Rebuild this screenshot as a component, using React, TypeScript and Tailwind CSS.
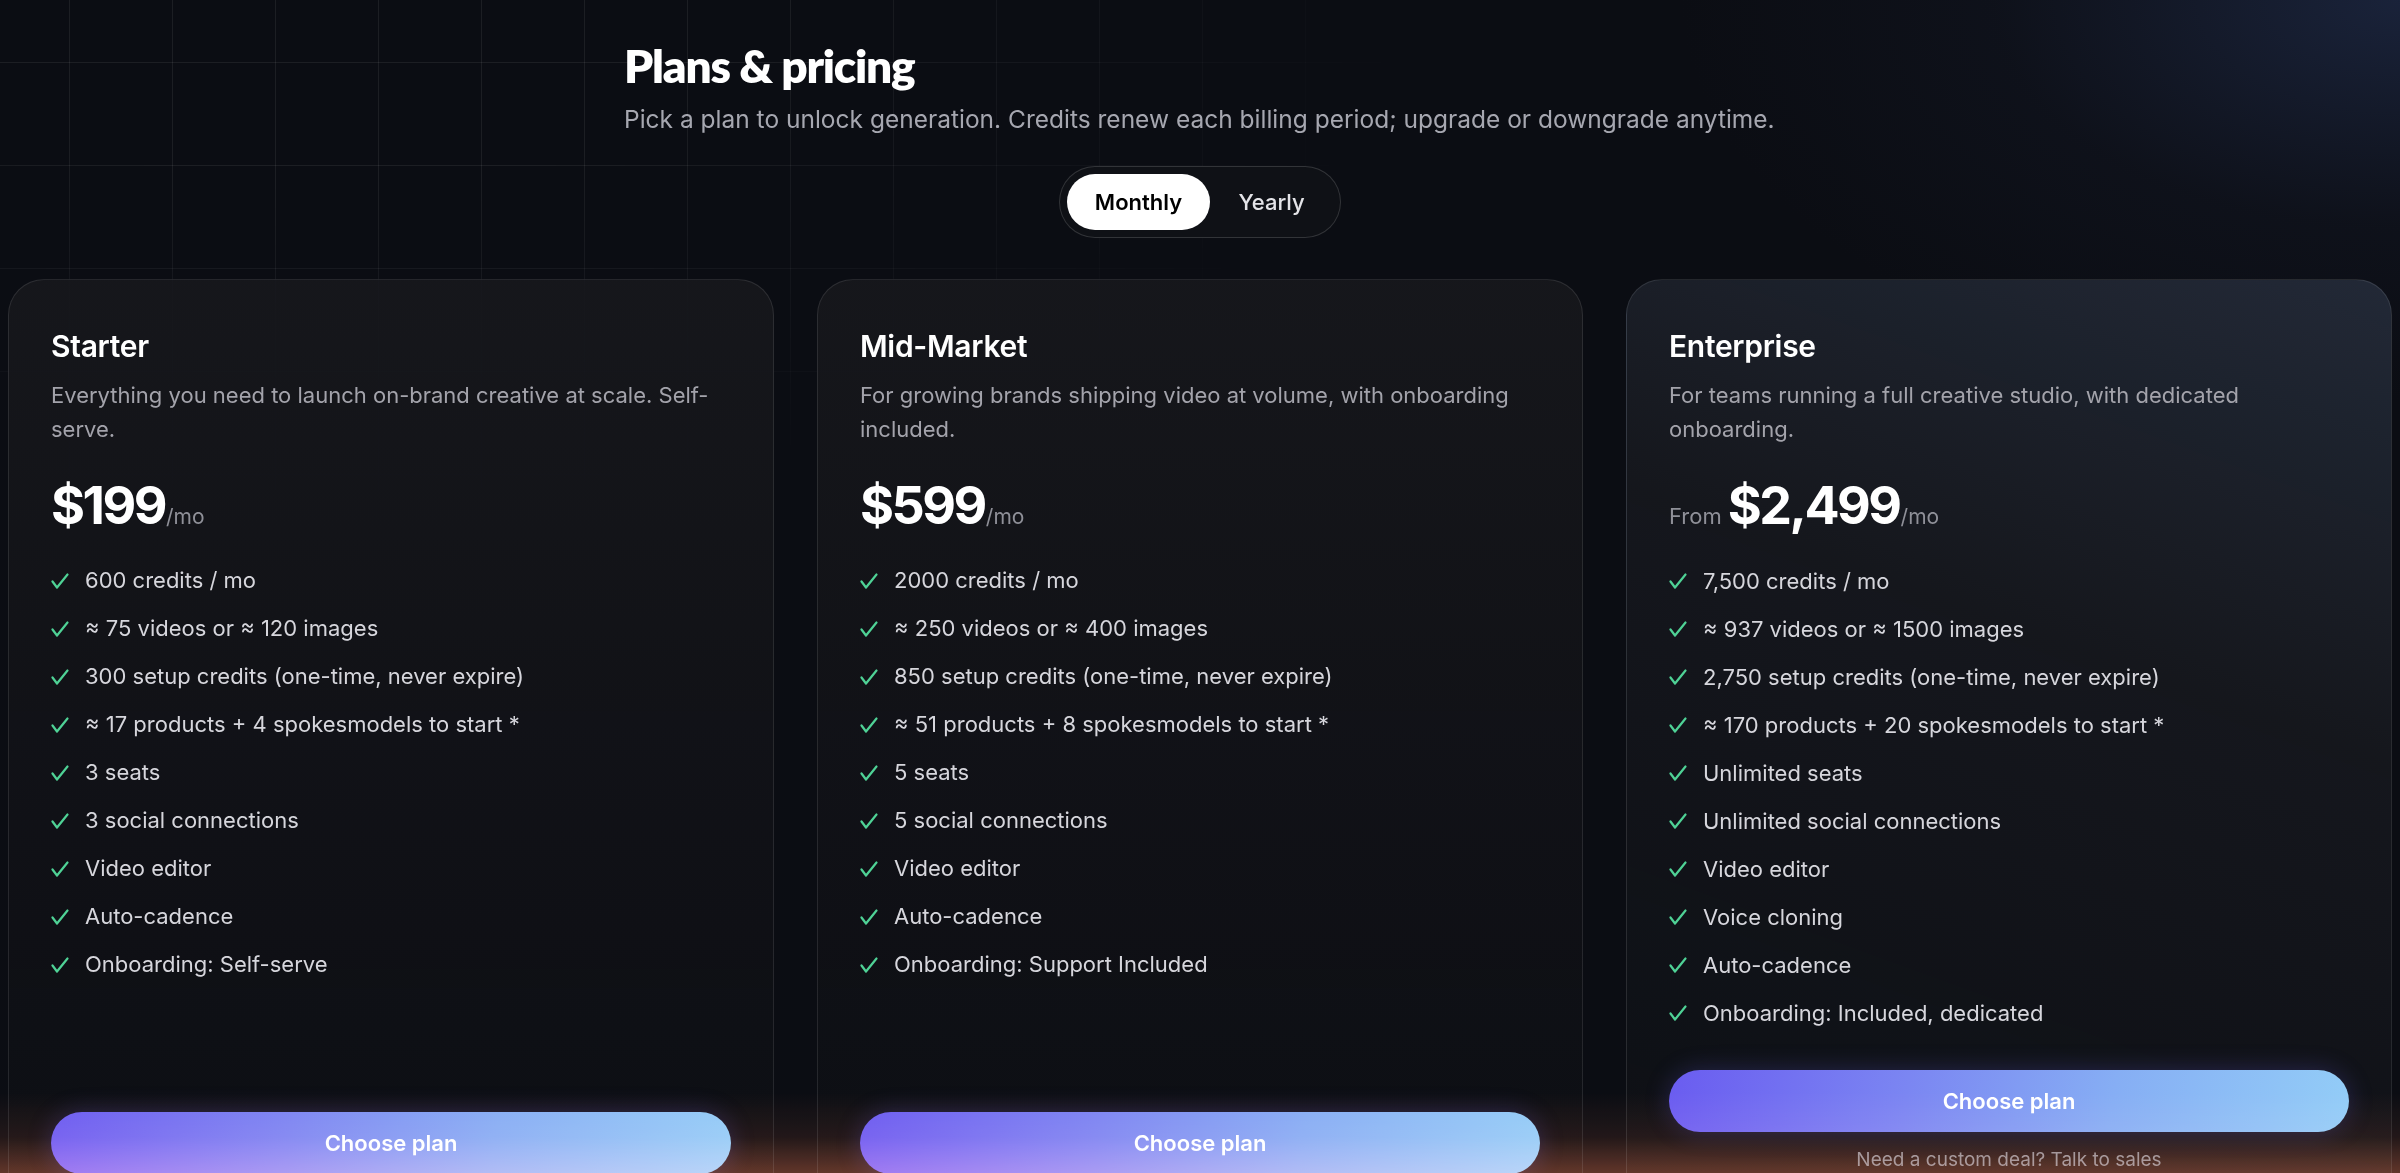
import React, { useState } from "react";

type Plan = {
  name: string;
  blurb: string;
  price: string;
  prefix?: string;
  features: string[];
  footnote?: string;
  tint?: boolean;
};

const plans: Plan[] = [
  {
    name: "Starter",
    blurb: "Everything you need to launch on-brand creative at scale. Self-serve.",
    price: "$199",
    features: [
      "600 credits / mo",
      "≈ 75 videos or ≈ 120 images",
      "300 setup credits (one-time, never expire)",
      "≈ 17 products + 4 spokesmodels to start *",
      "3 seats",
      "3 social connections",
      "Video editor",
      "Auto-cadence",
      "Onboarding: Self-serve",
    ],
  },
  {
    name: "Mid-Market",
    blurb: "For growing brands shipping video at volume, with onboarding included.",
    price: "$599",
    features: [
      "2000 credits / mo",
      "≈ 250 videos or ≈ 400 images",
      "850 setup credits (one-time, never expire)",
      "≈ 51 products + 8 spokesmodels to start *",
      "5 seats",
      "5 social connections",
      "Video editor",
      "Auto-cadence",
      "Onboarding: Support Included",
    ],
  },
  {
    name: "Enterprise",
    blurb: "For teams running a full creative studio, with dedicated onboarding.",
    price: "$2,499",
    prefix: "From",
    features: [
      "7,500 credits / mo",
      "≈ 937 videos or ≈ 1500 images",
      "2,750 setup credits (one-time, never expire)",
      "≈ 170 products + 20 spokesmodels to start *",
      "Unlimited seats",
      "Unlimited social connections",
      "Video editor",
      "Voice cloning",
      "Auto-cadence",
      "Onboarding: Included, dedicated",
    ],
    footnote: "Need a custom deal? Talk to sales",
    tint: true,
  },
];

function Check() {
  return (
    <svg
      aria-hidden="true"
      viewBox="0 0 18 16"
      className="h-[16px] w-[18px]"
      fill="none"
      stroke="currentColor"
      strokeWidth="2.2"
      strokeLinecap="round"
      strokeLinejoin="round"
    >
      <path d="M1.5 8.5 L6 14.5 L16.5 1.5" />
    </svg>
  );
}

function PlanCard({ plan }: { plan: Plan }) {
  return (
    <div
      className={`relative flex flex-col rounded-[36px] border border-white/10 px-[42px] pt-[46px] pb-[42px] ${
        plan.tint
          ? "bg-[linear-gradient(200deg,rgba(36,43,58,0.92)_0%,rgba(22,24,30,0.9)_40%,rgba(14,16,21,0.8)_100%)]"
          : "bg-[linear-gradient(180deg,rgba(23,24,29,0.9)_0%,rgba(18,19,24,0.9)_45%,rgba(14,15,20,0.8)_100%)]"
      }`}
    >
      <h2 className="text-[30px] font-semibold leading-[40px] tracking-[-0.3px] text-white">
        {plan.name}
      </h2>
      <p className="mt-3 text-[22px] leading-[34px] text-[#a3a3ab]">{plan.blurb}</p>

      <div className="mt-[34px] flex items-baseline">
        {plan.prefix && (
          <span className="mr-[6px] text-[22px] text-[#8f9098]">{plan.prefix}</span>
        )}
        <span className="text-[52px] font-bold leading-none tracking-[-2.5px] text-white">
          {plan.price}
        </span>
        <span className="ml-[1px] text-[21px] text-[#8f9098]">/mo</span>
      </div>

      <ul className="mt-[24px] flex-1">
        {plan.features.map((f) => (
          <li key={f} className="flex h-12 items-center text-[22px] text-[#d6d6dc]">
            <span className="flex w-[34px] shrink-0 text-[#4fd296]">
              <Check />
            </span>
            <span>{f}</span>
          </li>
        ))}
      </ul>

      <button
        type="button"
        className="mt-[33px] h-[62px] w-full rounded-full bg-[linear-gradient(100deg,#6a5cf0_0%,#7b86f2_35%,#86aef4_65%,#93cdf7_100%)] text-[22px] font-semibold text-white shadow-[0_0_24px_rgba(110,100,240,0.25)]"
      >
        Choose plan
      </button>
      {plan.footnote && (
        <p className="mt-[14px] text-center text-[19px] leading-[28px] text-[#8c8c95]">
          {plan.footnote}
        </p>
      )}
    </div>
  );
}

export default function App() {
  const [billing, setBilling] = useState<"monthly" | "yearly">("monthly");

  return (
    <div
      className="relative min-h-screen overflow-hidden bg-[#0b0d13] pb-10 text-white"
      style={{ fontFamily: "Inter, 'Noto Sans', sans-serif" }}
    >
      {/* backdrop: grid and blue corner glow */}
      <div className="pointer-events-none absolute left-0 top-0 h-[700px] w-[1400px] bg-[linear-gradient(to_right,rgba(255,255,255,0.07)_1px,transparent_1px),linear-gradient(to_bottom,rgba(255,255,255,0.07)_1px,transparent_1px)] [background-position:69px_62px] [background-size:103px_103px] [mask-image:radial-gradient(ellipse_1100px_520px_at_25%_0%,black_35%,transparent_100%)]" />
      <div className="pointer-events-none absolute right-0 top-0 h-[700px] w-[1100px] bg-[radial-gradient(ellipse_900px_500px_at_100%_0%,rgba(40,56,96,0.5)_0%,rgba(24,30,48,0.25)_45%,transparent_80%)]" />

      <div className="relative">
        <header className="mx-auto max-w-6xl pt-[43px]">
          <h1
            className="text-[46px] font-extrabold leading-none tracking-[-1.2px] text-white"
            style={{ fontFamily: "Lato, sans-serif" }}
          >
            Plans &amp; pricing
          </h1>
          <p className="mt-[14px] text-[24.5px] leading-[32px] text-[#a6a7b0]">
            Pick a plan to unlock generation. Credits renew each billing period; upgrade or downgrade anytime.
          </p>
        </header>

        <div className="mt-[31px] flex justify-center">
          <div className="flex rounded-full border border-white/15 bg-[#0f1116] p-[7px]">
            <button
              type="button"
              onClick={() => setBilling("monthly")}
              className={`h-[56px] w-[143px] rounded-full text-[22px] font-semibold ${
                billing === "monthly" ? "bg-white text-black" : "text-[#e4e4e8]"
              }`}
            >
              Monthly
            </button>
            <button
              type="button"
              onClick={() => setBilling("yearly")}
              className={`h-[56px] w-[123px] rounded-full text-[22px] font-medium ${
                billing === "yearly" ? "bg-white text-black" : "text-[#e4e4e8]"
              }`}
            >
              Yearly
            </button>
          </div>
        </div>

        <div className="mt-[41px] grid grid-cols-3 gap-[43px] px-2">
          {plans.map((p) => (
            <PlanCard key={p.name} plan={p} />
          ))}
        </div>
      </div>

      <div className="pointer-events-none absolute left-0 right-0 top-[1093px] h-[80px] bg-[linear-gradient(to_bottom,transparent_0%,rgba(150,70,40,0.16)_55%,rgba(200,95,55,0.45)_100%)] mix-blend-screen" />
    </div>
  );
}
